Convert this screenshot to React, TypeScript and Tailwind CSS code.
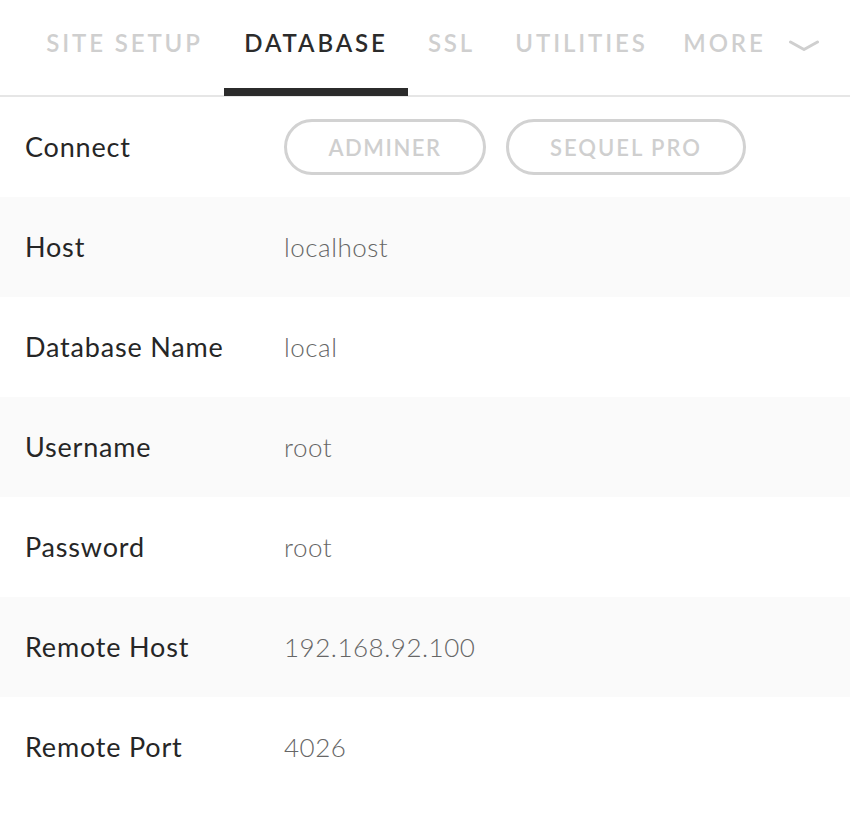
const TABS = [
  { label: 'SITE SETUP', w: 'w-[199px]' },
  { label: 'DATABASE', w: 'w-[184px]', active: true },
  { label: 'SSL', w: 'w-[87px]' },
  { label: 'UTILITIES', w: 'w-[173px]' },
  { label: 'MORE', w: 'w-[113px]' },
]

const ROWS = [
  { label: 'Host', value: 'localhost' },
  { label: 'Database Name', value: 'local' },
  { label: 'Username', value: 'root' },
  { label: 'Password', value: 'root' },
  { label: 'Remote Host', value: '192.168.92.100' },
  { label: 'Remote Port', value: '4026' },
]

export default function App() {
  return (
    <div className="w-[850px] h-[820px] bg-white font-['Lato',sans-serif] overflow-hidden">
      {/* tab bar */}
      <div className="h-[97px] flex items-stretch pl-[25px] border-b-2 border-[#e6e6e6]">
        {TABS.map(t => (
          <div key={t.label} className={`${t.w} relative flex items-center justify-center pb-[10px]`}>
            <span className={`text-[24px] font-semibold tracking-[0.12em] ${t.active ? 'text-[#2b2b2b]' : 'text-[#cfcfcf]'}`}>
              {t.label}
            </span>
            {t.active && <div className="absolute left-0 right-0 bottom-[-1px] h-[8px] bg-[#2b2b2b]" />}
          </div>
        ))}
        <div className="flex items-center pl-[8px] pb-[4px]">
          <svg width="30" height="12" viewBox="0 0 30 12" fill="none">
            <polyline points="1.5,2 15,9.5 28.5,2" stroke="#cfcfcf" strokeWidth="3" strokeLinecap="round" strokeLinejoin="round" />
          </svg>
        </div>
      </div>

      {/* connect row */}
      <div className="h-[100px] flex items-center">
        <div className="w-[284px] pl-[25px] text-[27px] tracking-[0.03em] text-[#262626]">Connect</div>
        <div className="flex gap-[20px]">
          <button className="w-[202px] h-[56px] rounded-full border-[3px] border-[#d2d2d2] text-[#cfcfcf] text-[22px] font-semibold tracking-[0.07em]">
            ADMINER
          </button>
          <button className="w-[240px] h-[56px] rounded-full border-[3px] border-[#d2d2d2] text-[#cfcfcf] text-[22px] font-semibold tracking-[0.09em]">
            SEQUEL PRO
          </button>
        </div>
      </div>

      {ROWS.map((r, i) => (
        <div key={r.label} className={`h-[100px] flex items-center ${i % 2 === 0 ? 'bg-[#fafafa]' : 'bg-white'}`}>
          <div className="w-[284px] pl-[25px] text-[27px] tracking-[0.03em] text-[#262626]">{r.label}</div>
          <div className="text-[26px] font-light tracking-[0.02em] text-[#666666]">{r.value}</div>
        </div>
      ))}
    </div>
  )
}
